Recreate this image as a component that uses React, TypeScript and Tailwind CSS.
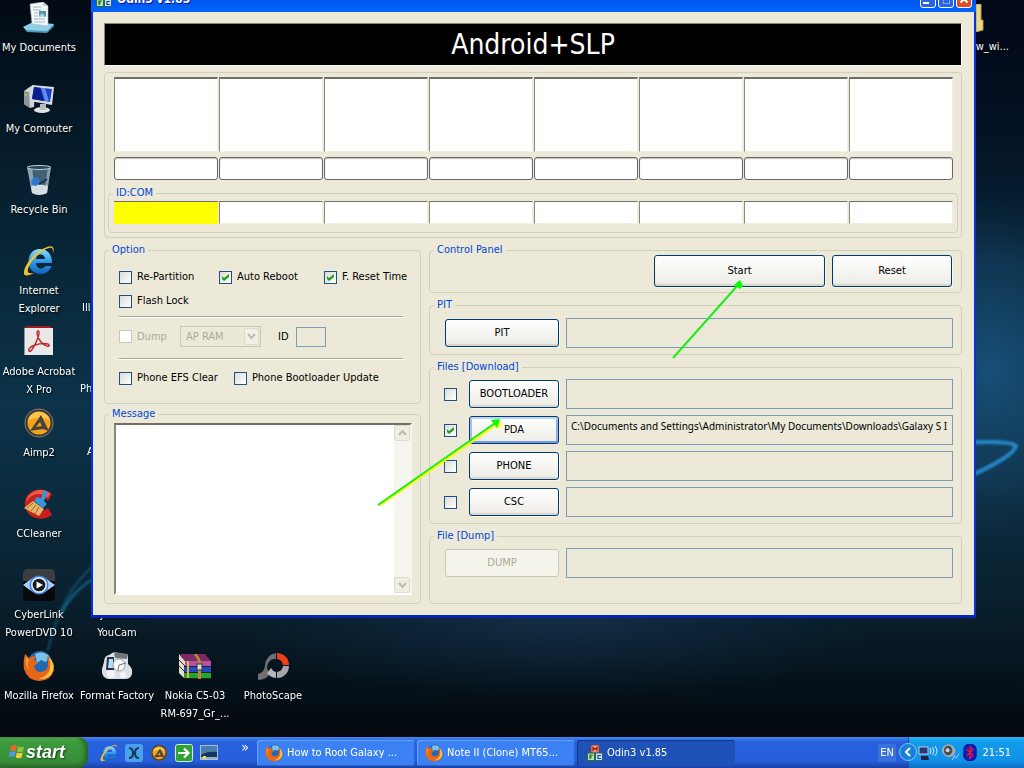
import React, { useState } from "react";

type IconProps = { className?: string };

/* ---------- Desktop icons ---------- */

function DocumentsIcon() {
  return (
    <svg viewBox="0 0 32 32" className="size-8" aria-hidden="true">
      <path d="M0 25 L10 20 L31 22 L24 30 L4 29Z" fill="#8fd0e6" />
      <path d="M0 25 L4 28 L24 29 L31 22 L31 24 L24 31 L4 30Z" fill="#4d9cc0" />
      <path d="M7 2 L20 0 L25 4 L25 24 L9 22Z" fill="#f3f8fb" stroke="#9db4c1" strokeWidth=".6" />
      <path d="M20 0 L20 4 L25 4Z" fill="#c5d6de" />
      <path d="M10 5h8M10 8h8M11 11h4M11 14h4M11 17h11M11 20h11" stroke="#9fb2bd" strokeWidth="1" />
      <rect x="16" y="9" width="7" height="6" fill="#4d92b8" />
      <path d="M16 14l3-3 4 4h-7z" fill="#a9d5c8" />
    </svg>
  );
}

function ComputerIcon() {
  return (
    <svg viewBox="0 0 32 32" className="size-8" aria-hidden="true">
      <path d="M1 8 L8 3 L12 4 L11 24 L7 25 L1 21Z" fill="#cfd4d6" />
      <path d="M1 8 L6 9 L7 25 L1 21Z" fill="#8e9698" />
      <circle cx="3" cy="12" r="1" fill="#9be04a" />
      <ellipse cx="19" cy="27" rx="8" ry="3" fill="#dfe3e5" />
      <path d="M17 21h6v6h-6z" fill="#b8bfc2" />
      <path d="M9 2 L31 4 L29 22 L7 18Z" fill="#d9dee0" />
      <path d="M11 4 L29 6 L27 19 L9 16Z" fill="#1c3fc4" />
      <path d="M11 4 L17 5 L21 18 L9 16Z" fill="#0a1f8a" />
      <path d="M18 5 L22 5 L26 18 L22 18Z" fill="#5f8df0" />
    </svg>
  );
}

function BinIcon() {
  return (
    <svg viewBox="0 0 32 32" className="size-8" aria-hidden="true">
      <path d="M4 3 L28 3 L24 29 Q16 33 9 29Z" fill="#52718a" fillOpacity=".8" />
      <path d="M4 3 L9 3 L12 30 L9 29Z" fill="#a9bdca" fillOpacity=".7" />
      <path d="M25 3 L28 3 L24 29 L21 30Z" fill="#b9c8d1" fillOpacity=".6" />
      <path d="M8 22 Q16 19 25 22 L24 29 Q16 33 9 29Z" fill="#d5dde0" />
      <ellipse cx="16" cy="3.500" rx="12" ry="2" fill="#28455c" stroke="#c3d0d8" />
      <path d="M8 17l4-4 4 2 1 4-4 3-4-1z" fill="#2f78cf" />
      <path d="M16 20l4-2 4 -3" stroke="#19344c" strokeWidth="2" fill="none" />
    </svg>
  );
}

function IeIcon({ className = "size-8" }: IconProps) {
  return (
    <svg viewBox="0 0 32 32" className={className} aria-hidden="true">
      <defs>
        <linearGradient id="ie" x1="0" y1="0" x2="0" y2="1">
          <stop offset="0" stopColor="#8fdcff" />
          <stop offset=".5" stopColor="#2a9be8" />
          <stop offset="1" stopColor="#1460b8" />
        </linearGradient>
      </defs>
      <path
        d="M17 4 C25 4 29 10 29 18 L13 18 C13.500 22 15.500 23.500 18 23.500 C20 23.500 21.500 22.500 22.500 21 L28.500 21 C27 26 23 29 17.500 29 C10.500 29 5.500 24 5.500 16.500 C5.500 9 10.500 4 17 4Z M13 14 L22 14 C22 11 20 9.500 17.500 9.500 C15 9.500 13.300 11 13 14Z"
        fill="url(#ie)"
        fillRule="evenodd"
      />
      <path d="M30 8 C32 2 29 0 24 2 C14 5 2 18 1 27 C0 32 6 31 11 28 C6 29 4 28 5 24 C8 15 18 5 26 3 C30 2 30 5 30 8Z" fill="#f2c230" />
    </svg>
  );
}

function AcrobatIcon() {
  return (
    <svg viewBox="0 0 32 32" className="size-8" aria-hidden="true">
      <rect x="1" y="2" width="29" height="27" fill="#e9e9e9" />
      <path d="M1 2 L3 0 H28 V2Z" fill="#a41a1c" />
      <path d="M1 2 h1 v27 h-1z" fill="#8f9598" />
      <path
        d="M15 5 C13 5 14 11 18 16 C22 21 27 21 26 19 C25 17 18 17 12 19 C6 21 5 24 6 25 C8 27 12 19 14 14 C16 9 17 5 15 5Z"
        fill="none"
        stroke="#c02427"
        strokeWidth="1.400"
      />
    </svg>
  );
}

function AimpIcon({ className = "size-8" }: IconProps) {
  return (
    <svg viewBox="0 0 32 32" className={className} aria-hidden="true">
      <circle cx="16" cy="16" r="15" fill="#35383a" />
      <circle cx="16" cy="16" r="14" fill="none" stroke="#777b7d" strokeWidth="1" />
      <circle cx="16" cy="16" r="11.500" fill="#f6a21a" />
      <path d="M5 13 A11.500 11.500 0 0 1 27 13 Q16 8 5 13Z" fill="#ffc44d" />
      <path d="M18 8 L26 24 L20 22 L17 15 L13 20 L19 19 L20 22 L7 24Z" fill="#47433b" />
    </svg>
  );
}

function CCleanerIcon() {
  return (
    <svg viewBox="0 0 32 32" className="size-8" aria-hidden="true">
      <path d="M29 6 L25 13 C22 8 13 8 11 15 C10 21 15 25 20 23 L25 20 L29 27 C20 34 4 31 2 18 C0 4 17 -4 29 6Z" fill="#c9201d" />
      <path d="M27 5 C17 -2 4 4 3 14 C9 4 19 4 25 10Z" fill="#ec5a4c" />
      <path d="M21 2 L25 4 L21 13 L24 16 L20 20 L11 13 L14 9 L18 10Z" fill="#3b93d8" />
      <path d="M10 13 L21 21 L16 28 L1 20Z" fill="#e7b668" />
      <path d="M10 15 L4 20 M13 17 L8 23 M16 19 L12 26" stroke="#94632a" strokeWidth="1" />
    </svg>
  );
}

function PowerDvdIcon() {
  return (
    <svg viewBox="0 0 32 32" className="size-8" aria-hidden="true">
      <rect width="32" height="32" rx="4" fill="#08090b" />
      <path d="M0 4 a4 4 0 0 1 4 -4 H28 a4 4 0 0 1 4 4 V12 H0Z" fill="#3b3d40" />
      <path d="M0 16 Q8 10 10 9 Q16 5 22 9 L32 16 L22 23 Q16 27 10 23 Q8 22 0 16Z" fill="#a9cdf8" />
      <circle cx="16" cy="16" r="9.500" fill="#3f7fd8" />
      <circle cx="16" cy="16" r="8" fill="#d7eaff" />
      <circle cx="16" cy="16" r="6.300" fill="#17191c" />
      <path d="M13.500 12.500 L20 16 L13.500 19.500Z" fill="#fff" />
    </svg>
  );
}

function FirefoxIcon({ className = "size-8" }: IconProps) {
  return (
    <svg viewBox="0 0 32 32" className={className} aria-hidden="true">
      <circle cx="17" cy="13" r="12" fill="#2369b0" />
      <path d="M12 4 Q20 0 26 6 L23 12 L18 10 L14 13Z" fill="#79c4ee" />
      <path
        d="M2 4 L6 8 Q9 6 13 6 L11 10 L15 13 L11 16 Q12 22 18 22 Q26 21 25 12 L24 6 Q32 12 31 20 Q28 31 16 31 Q4 30 1 19 Q0 10 2 4Z"
        fill="#e8661a"
      />
      <path d="M26 7 Q32 13 30 21 Q26 30 16 29 Q25 26 27 19 Q28 13 26 7Z" fill="#ffc83a" />
      <path d="M3 7 L6 10 Q4 15 6 20 Q2 16 3 7Z" fill="#f9a13a" />
    </svg>
  );
}

function FormatFactoryIcon() {
  return (
    <svg viewBox="0 0 32 32" className="size-8" aria-hidden="true">
      <path d="M3 12 Q3 6 8 5 L13 2 L27 5 L27 14 Q32 18 31 24 Q30 29 24 29 L7 29 Q0 27 1 19Z" fill="#dbe1e4" />
      <path d="M13 2 L27 4 L26 9 L14 8Z" fill="#6d777c" />
      <path d="M6 7 L13 7 L13 20 L5 20Z" fill="#20354a" />
      <path d="M8 9 H12 V18 H7Z" fill="#b9dcf4" />
      <circle cx="18" cy="15" r="6" fill="#fafcfd" stroke="#9aa4a9" />
      <path d="M18 15 L25 13 M18 15 L17 20" stroke="#6a7175" />
      <circle cx="10" cy="24" r="4" fill="#f3f5f6" />
      <circle cx="22" cy="25" r="3" fill="#f3f5f6" />
    </svg>
  );
}

function WinrarIcon() {
  return (
    <svg viewBox="0 0 32 32" className="size-8" aria-hidden="true">
      <path d="M0 4 L6 11 L6 29 L0 23Z" fill="#e4dccb" />
      <path d="M0 4 L26 4 L32 11 L6 11Z" fill="#7d2a63" />
      <path d="M6 11 H32 V16 H6Z" fill="#b7529f" />
      <path d="M5 17 H32 V22 H5Z" fill="#2549c7" />
      <path d="M5 23 H32 V28 H5Z" fill="#24a52f" />
      <path d="M5 16.500 H32 M5 22.500 H32 M5 28.500 H32" stroke="#2b2018" />
      <path d="M0 10 L6 16 M0 16 L6 22" stroke="#3a2b1c" />
      <path d="M8 11 h2 v17 h-2z" fill="#d9b94c" />
      <path d="M15 4 L18 4 L22 11 V29 H19 V11Z" fill="#b98a35" />
      <rect x="18" y="14" width="5" height="6" fill="#d6d8d9" stroke="#333" />
    </svg>
  );
}

function PhotoScapeIcon() {
  return (
    <svg viewBox="0 0 32 32" className="size-8" aria-hidden="true">
      <path d="M19 3 A12.500 12.500 0 0 0 8 15 Q8 22 1 24 V30 Q10 30 13 23 A8 8 0 0 1 19 9Z" fill="#6d6f70" />
      <path d="M20 3 A12 12 0 0 1 32 15 H26 A7 7 0 0 0 20 9Z" fill="#ef3e1c" />
      <path d="M32 16 A12 12 0 0 1 20 28 V22 A7 7 0 0 0 26 16Z" fill="#a4a6a7" />
      <path d="M19 28 A12 12 0 0 1 10 23 L14 18 A7 7 0 0 0 19 22Z" fill="#b4b6b7" />
    </svg>
  );
}

function BlocksIcon({ className }: IconProps) {
  return (
    <svg viewBox="0 0 16 16" className={className} aria-hidden="true">
      <rect x="4" y="0" width="8" height="8" fill="#f1a58b" stroke="#8b3a20" />
      <path d="M6 6.500V2.500l2 2 2-2v4" fill="none" stroke="#a01010" strokeWidth="1.200" />
      <rect x="0.500" y="8" width="7" height="7.500" fill="#b9e0ac" stroke="#2d6b3a" />
      <path d="M3 14v-4h3M3 12h2" fill="none" stroke="#17652a" strokeWidth="1.200" />
      <rect x="8.500" y="8" width="7" height="7.500" fill="#c2e3f2" stroke="#2d5a7d" />
      <path d="M14 10.500h-3v3h3" fill="none" stroke="#1b4f80" strokeWidth="1.200" />
    </svg>
  );
}

function XpFlag() {
  return (
    <svg viewBox="0 0 16 16" className="size-4" aria-hidden="true">
      <path d="M2 2 Q5 0 8 2 L7 7 Q4 5.500 1 7Z" fill="#f0652c" />
      <path d="M9 2.500 Q12 4 15 2.500 L14 7.500 Q11 9 8 7.500Z" fill="#8cc63e" />
      <path d="M.8 8 Q4 6.500 6.800 8 L5.700 13 Q3 11.500 0 13Z" fill="#4a9be8" />
      <path d="M7.800 8.500 Q10.500 10 13.800 8.500 L12.600 13.500 Q10 15 6.800 13.500Z" fill="#fbcf3a" />
    </svg>
  );
}

/* ---------- Desktop ---------- */

function Wallpaper() {
  return (
    <svg viewBox="0 0 1024 737" preserveAspectRatio="none" className="absolute inset-0 size-full" aria-hidden="true">
      <defs>
        <linearGradient id="base" x1="0" y1="0" x2="0" y2="1">
          <stop offset="0" stopColor="#020a14" />
          <stop offset=".25" stopColor="#06202f" />
          <stop offset=".55" stopColor="#0c3349" />
          <stop offset=".8" stopColor="#0a2231" />
          <stop offset="1" stopColor="#03080d" />
        </linearGradient>
        <radialGradient id="glow">
          <stop offset="0" stopColor="#185078" />
          <stop offset=".6" stopColor="#143f60" stopOpacity=".6" />
          <stop offset="1" stopColor="#0b2840" stopOpacity="0" />
        </radialGradient>
        <radialGradient id="glow2">
          <stop offset="0" stopColor="#163048" />
          <stop offset="1" stopColor="#0b2840" stopOpacity="0" />
        </radialGradient>
        <linearGradient id="dark" x1="0" y1="0" x2="0" y2="1">
          <stop offset="0" stopColor="#020817" stopOpacity="1" />
          <stop offset="1" stopColor="#04142c" stopOpacity="0" />
        </linearGradient>
        <filter id="soft">
          <feGaussianBlur stdDeviation="1.200" />
        </filter>
      </defs>
      <rect width="1024" height="737" fill="url(#base)" />
      <rect x="900" width="124" height="300" fill="url(#dark)" />
      <ellipse cx="990" cy="370" rx="150" ry="190" fill="url(#glow)" />
      <ellipse cx="560" cy="610" rx="340" ry="90" fill="url(#glow2)" />
      <g fill="none" strokeLinecap="round" filter="url(#soft)">
        <path d="M94 566 Q62 590 48 650" stroke="#14698c" strokeWidth="3" opacity=".45" />
        <path d="M94 578 Q72 592 62 612" stroke="#1c85aa" strokeWidth="3" opacity=".55" />
        <path d="M960 443 Q1010 440 1016 446 Q1014 456 970 476" stroke="#2688c8" strokeWidth="4" />
      </g>
    </svg>
  );
}

type Shortcut = { label: string[]; icon: React.ReactNode; place: string };

const shortcuts: Shortcut[] = [
  { label: ["My Documents"], icon: <DocumentsIcon />, place: "left-0 top-[2px]" },
  { label: ["My Computer"], icon: <ComputerIcon />, place: "left-0 top-[83px]" },
  { label: ["Recycle Bin"], icon: <BinIcon />, place: "left-0 top-[164px]" },
  { label: ["Internet", "Explorer"], icon: <IeIcon />, place: "left-0 top-[245px]" },
  { label: ["Adobe Acrobat", "X Pro"], icon: <AcrobatIcon />, place: "left-0 top-[326px]" },
  { label: ["Aimp2"], icon: <AimpIcon />, place: "left-0 top-[407px]" },
  { label: ["CCleaner"], icon: <CCleanerIcon />, place: "left-0 top-[488px]" },
  { label: ["CyberLink", "PowerDVD 10"], icon: <PowerDvdIcon />, place: "left-0 top-[569px]" },
  { label: ["Mozilla Firefox"], icon: <FirefoxIcon />, place: "left-0 top-[650px]" },
  { label: ["CyberLink", "YouCam"], icon: null, place: "left-[78px] top-[569px]" },
  { label: ["Format Factory"], icon: <FormatFactoryIcon />, place: "left-[78px] top-[650px]" },
  { label: ["Nokia C5-03", "RM-697_Gr_..."], icon: <WinrarIcon />, place: "left-[156px] top-[650px]" },
  { label: ["PhotoScape"], icon: <PhotoScapeIcon />, place: "left-[234px] top-[650px]" },
];

function DesktopShortcut({ label, icon, place }: Shortcut) {
  return (
    <a
      href="#"
      className={`absolute ${place} flex w-[78px] flex-col items-center gap-[5px] text-center whitespace-nowrap text-white [text-shadow:1px_1px_2px_#000]`}
    >
      <span className="block size-8">{icon}</span>
      <span className="flex flex-col items-center leading-[18px]">
        {label.map((line) => (
          <span key={line}>{line}</span>
        ))}
      </span>
    </a>
  );
}

/* ---------- Form controls ---------- */

function Check({ label, checked, disabled, name }: { label?: string; checked?: boolean; disabled?: boolean; name?: string }) {
  const [on, setOn] = useState(!!checked);
  return (
    <label className={`flex items-center gap-[5px] whitespace-nowrap ${disabled ? "text-[#aca899]" : ""}`}>
      <span className="relative block size-[13px] shrink-0">
        <input
          type="checkbox"
          aria-label={label ? undefined : name}
          checked={on}
          disabled={disabled}
          onChange={(e) => setOn(e.target.checked)}
          className="block size-[13px] appearance-none border border-[#1d5281] bg-linear-to-br from-[#dcdcd7] to-white disabled:border-[#cac8bb] disabled:bg-white disabled:bg-none"
        />
        {on && (
          <svg viewBox="0 0 13 13" className="pointer-events-none absolute inset-0 size-[13px]" aria-hidden="true">
            <path d="M3 5 L5 7 L10 3 V6 L5 10 L3 8Z" fill="#21a121" />
          </svg>
        )}
      </span>
      {label && <span>{label}</span>}
    </label>
  );
}

function XpButton({ children, className = "", focused, disabled }: { children: React.ReactNode; className?: string; focused?: boolean; disabled?: boolean }) {
  const look = disabled
    ? "border-[#c9c7ba] bg-[#f5f4ea] text-[#aca899]"
    : focused
      ? "border-[#003c74] bg-linear-to-b from-white to-[#ecebe5] shadow-[inset_0_2px_0_#bcd4f6,inset_0_-2px_0_#7a9ae0,inset_2px_0_0_#a3bff0,inset_-2px_0_0_#8faee8]"
      : "border-[#003c74] bg-linear-to-b from-white to-[#ecebe5] shadow-[inset_0_-2px_1px_#d8d5cb,1px_1px_0_#f8f7f2]";
  return (
    <button type="button" disabled={disabled} className={`shrink-0 rounded-[3px] border text-center ${look} ${className}`}>
      {children}
    </button>
  );
}

function PathField({ name, value = "" }: { name: string; value?: string }) {
  return (
    <input
      type="text"
      aria-label={name}
      value={value}
      readOnly
      className="h-[30px] min-w-0 flex-1 border border-[#7f9db9] bg-transparent px-1 pb-[9px] font-['Noto_Sans',sans-serif] text-[10px] outline-none"
    />
  );
}

function Group({ title, className = "", bodyClassName, children }: { title: string; className?: string; bodyClassName: string; children: React.ReactNode }) {
  return (
    <fieldset className={`min-w-0 rounded-[4px] border border-[#d0d0bf] ${className}`}>
      <legend className="ml-1 px-[3px] leading-[14px] text-[#0046d5]">{title}</legend>
      <div className={bodyClassName}>{children}</div>
    </fieldset>
  );
}

const slots = [1, 2, 3, 4, 5, 6, 7, 8];
const sunken = "border border-t-[#716f64] border-l-[#8a887c] border-r-[#f1efe2] border-b-[#f1efe2]";

function DevicePanel() {
  return (
    <section aria-label="Devices" className="rounded-[4px] border border-[#d0d0bf] px-[3px] pt-1 pb-1">
      <div className="grid grid-cols-8 gap-px pr-[5px] pl-[6px]">
        {slots.map((n) => (
          <div key={n} className={`h-[75px] border-t-2 bg-white ${sunken}`} />
        ))}
      </div>
      <div className="mt-[5px] grid grid-cols-8 gap-px pr-[5px] pl-[6px]">
        {slots.map((n) => (
          <div key={n} role="progressbar" aria-label={`Slot ${n}`} className="h-[23px] rounded-[3px] border border-[#686868] bg-white shadow-[inset_0_1px_1px_#bebebe]" />
        ))}
      </div>
      <Group title="ID:COM" className="mt-[6px]" bodyClassName="pt-px pr-1 pb-2 pl-[5px]">
        <div className="grid grid-cols-8 gap-px">
          {slots.map((n) =>
            n === 1 ? (
              <div key={n} className="h-[23px] border-t border-[#716f64] bg-[#ff0]" />
            ) : (
              <div key={n} className={`h-[23px] bg-white ${sunken}`} />
            ),
          )}
        </div>
      </Group>
    </section>
  );
}

function Divider() {
  return <hr className="h-[2px] border-0 border-t border-b border-t-[#aca899] border-b-white" />;
}

function OptionPanel() {
  return (
    <Group title="Option" bodyClassName="pt-[13px] pr-[17px] pb-[18px] pl-[14px]">
      <div className="grid grid-cols-[100px_105px_auto] gap-y-[10px] leading-[14px]">
        <Check label="Re-Partition" />
        <Check label="Auto Reboot" checked />
        <Check label="F. Reset Time" checked />
        <Check label="Flash Lock" />
      </div>
      <div className="mt-2">
        <Divider />
      </div>
      <div className="mt-2 flex items-center">
        <div className="w-[61px]">
          <Check label="Dump" disabled />
        </div>
        <div className="relative w-[81px]">
          <select aria-label="Dump area" disabled className="block h-[21px] w-full appearance-none border border-[#c9c7ba] bg-[#ebe8d8] px-[5px] text-[#aca899] opacity-100">
            <option>AP RAM</option>
          </select>
          <span className="pointer-events-none absolute top-[2px] right-[2px] flex h-[17px] w-[15px] items-center justify-center rounded-[2px] border border-[#dcdacb] bg-[#f2f0e6]">
            <svg viewBox="0 0 9 7" className="h-[7px] w-[9px]" aria-hidden="true">
              <path d="M1 1 L4.500 5 L8 1" fill="none" stroke="#bdbaab" strokeWidth="2" />
            </svg>
          </span>
        </div>
        <label className="ml-[17px] flex items-center gap-[7px]">
          ID
          <input type="text" className="h-[20px] w-[30px] border border-[#7f9db9] bg-transparent" />
        </label>
      </div>
      <div className="mt-[11px]">
        <Divider />
      </div>
      <div className="mt-[11px] flex gap-4 leading-[14px]">
        <Check label="Phone EFS Clear" />
        <Check label="Phone Bootloader Update" />
      </div>
    </Group>
  );
}

function ScrollArrow({ down }: { down?: boolean }) {
  return (
    <button type="button" disabled aria-label={down ? "Scroll down" : "Scroll up"} className="flex h-4 w-4 items-center justify-center rounded-[2px] border border-[#dedccf] bg-[#f0eee4]">
      <svg viewBox="0 0 9 7" className="h-[7px] w-[9px]" aria-hidden="true">
        <path d={down ? "M1 1 L4.500 5 L8 1" : "M1 5 L4.500 1 L8 5"} fill="none" stroke="#bdbaab" strokeWidth="2" />
      </svg>
    </button>
  );
}

function MessagePanel() {
  return (
    <Group title="Message" bodyClassName="pt-[2px] pr-2 pb-2 pl-[9px]">
      <div className="flex h-[172px] border-2 border-t-[#716f64] border-r-[#f6f5ee] border-b-white border-l-[#8a887c] bg-white">
        <textarea aria-label="Message" readOnly className="min-w-0 flex-1 resize-none bg-white outline-none" />
        <div className="flex w-4 flex-col justify-between bg-[#f6f5f0]">
          <ScrollArrow />
          <ScrollArrow down />
        </div>
      </div>
    </Group>
  );
}

const files = [
  { name: "BOOTLOADER" },
  { name: "PDA", checked: true, value: "C:\\Documents and Settings\\Administrator\\My Documents\\Downloads\\Galaxy S I" },
  { name: "PHONE" },
  { name: "CSC" },
];

function FilePanels() {
  return (
    <div className="flex min-w-0 flex-1 flex-col gap-[5px]">
      <Group title="Control Panel" bodyClassName="pr-[9px] pb-[5px]">
        <div className="-mt-[2px] flex justify-end gap-[7px]">
          <XpButton className="h-8 w-[171px]">Start</XpButton>
          <XpButton className="h-8 w-[120px]">Reset</XpButton>
        </div>
      </Group>
      <Group title="PIT" bodyClassName="pt-[6px] pr-2 pb-[6px] pl-[15px]">
        <div className="flex items-center gap-[7px]">
          <XpButton className="h-7 w-[114px]">PIT</XpButton>
          <PathField name="PIT file" />
        </div>
      </Group>
      <Group title="Files [Download]" bodyClassName="pt-[5px] pr-2 pb-[6px] pl-[14px]">
        <div className="flex flex-col gap-[6px]">
          {files.map((f) => (
            <div key={f.name} className="flex items-center">
              <Check name={`Use ${f.name}`} checked={f.checked} />
              <XpButton className="mr-[7px] ml-3 h-7 w-[90px]" focused={f.name === "PDA"}>
                {f.name}
              </XpButton>
              <PathField name={`${f.name} file`} value={f.value} />
            </div>
          ))}
        </div>
      </Group>
      <Group title="File [Dump]" bodyClassName="pt-[5px] pr-2 pb-[25px] pl-[15px]">
        <div className="flex items-center gap-[7px]">
          <XpButton disabled className="h-7 w-[114px]">
            DUMP
          </XpButton>
          <PathField name="Dump file" />
        </div>
      </Group>
    </div>
  );
}

function Arrows() {
  return (
    <svg viewBox="0 0 400 240" className="pointer-events-none absolute top-[280px] left-[281px] h-[240px] w-[400px]" aria-hidden="true">
      <path d="M5 240 L125 157" stroke="#ff0" strokeWidth="2" />
      <path d="M4 239 L124 155" stroke="#19ec19" strokeWidth="2" />
      <path d="M122 163 L127 154 L127 161Z" fill="#ff0" />
      <path d="M117 154 L126 153 L123 162Z" fill="#0f0" />
      <path d="M299 92 L364 19" stroke="#19ec19" strokeWidth="2" />
      <path d="M360 19 L366 14 L369 20 L366 23Z" fill="#0f0" />
    </svg>
  );
}

function OdinWindow() {
  const caption = "flex h-[18px] w-4 items-end justify-center rounded-[3px] border border-white pb-[3px]";
  return (
    <main className="absolute top-[-14px] right-[48px] left-[91px] border-r-2 border-b-[3px] border-l-2 border-[#0831d9] border-b-[#0526b4] bg-[#ece9d8]">
      <header className="-mx-[2px] flex h-[26px] items-center justify-between bg-linear-to-b from-[#0058ee] from-60% to-[#0066ff] pr-1 pl-[5px]">
        <h1 className="flex items-center gap-[5px] text-[12px] leading-4 font-bold whitespace-nowrap text-white [text-shadow:1px_1px_0_#0f1089]">
          <BlocksIcon className="size-4" />
          Odin3 v1.85
        </h1>
        <div className="flex gap-[2px]">
          <button type="button" aria-label="Minimize" className={`${caption} bg-[#2a64e4]`}>
            <span className="mr-1 h-[2px] w-[6px] bg-white" />
          </button>
          <button type="button" aria-label="Maximize" className={`${caption} border-[#5b8cf0] bg-[#2a64e4]`}>
            <span className="h-[7px] w-[7px] border border-[#7fa5f4]" />
          </button>
          <button type="button" aria-label="Close" className={`${caption} bg-[#e04e28]`}>
            <svg viewBox="0 0 10 10" className="size-[10px]" aria-hidden="true">
              <path d="M1.500 1.500 L8.500 8.500 M8.500 1.500 L1.500 8.500" stroke="#fff" strokeWidth="2" />
            </svg>
          </button>
        </div>
      </header>
      <div className="flex flex-col border-l border-[#dfe8f5] pt-[11px] pr-3 pb-[11px] pl-[10px]">
        <div className="flex h-[43px] items-center justify-center border border-t-[#8a887c] border-r-white border-b-white border-l-[#8a887c] bg-black text-[28px] leading-8 text-white">
          Android+SLP
        </div>
        <div className="mt-[6px]">
          <DevicePanel />
        </div>
        <div className="mt-[5px] flex gap-2">
          <div className="flex w-[317px] shrink-0 flex-col gap-[3px]">
            <OptionPanel />
            <MessagePanel />
          </div>
          <FilePanels />
        </div>
      </div>
      <Arrows />
    </main>
  );
}

/* ---------- Taskbar ---------- */

const tasks = [
  { label: "How to Root Galaxy ...", icon: <FirefoxIcon className="size-[18px]" /> },
  { label: "Note II (Clone) MT65...", icon: <FirefoxIcon className="size-[18px]" /> },
  { label: "Odin3 v1.85", icon: <BlocksIcon className="size-4" />, active: true },
];

function Taskbar() {
  return (
    <footer className="relative flex h-[31px] items-stretch bg-[linear-gradient(#3f8cf3_0px,#3577e8_2px,#2761dc_5px,#245edb_24px,#1941a5_31px)] text-white">
      <button
        type="button"
        className="flex w-[88px] items-center gap-px rounded-r-[10px] bg-[linear-gradient(#5eb55e_0px,#3d9a3d_5px,#388f38_24px,#2a6f2a_31px)] pb-[2px] pl-[9px] font-['Liberation_Sans',sans-serif] text-[18px] leading-5 font-bold italic shadow-[inset_-3px_0_4px_#256325] [text-shadow:1px_1px_2px_#173f17]"
      >
        <XpFlag />
        start
      </button>
      <nav aria-label="Quick launch" className="flex w-[169px] items-center gap-[7px] pl-3">
        <IeIcon className="size-[18px]" />
        <svg viewBox="0 0 18 18" className="size-[18px]" aria-hidden="true">
          <rect width="18" height="18" rx="3" fill="#4aa2ec" />
          <path d="M4 4 Q8 4 8 9 Q8 14 4 14 M14 4 Q10 4 10 9 Q10 14 14 14" fill="none" stroke="#12395e" strokeWidth="2" />
        </svg>
        <AimpIcon className="size-[18px]" />
        <svg viewBox="0 0 18 18" className="size-[18px]" aria-hidden="true">
          <rect x=".5" y=".5" width="17" height="17" rx="2" fill="#2fa336" stroke="#d4efd0" />
          <path d="M3 9 H13 M9 4.500 L13.500 9 L9 13.500" fill="none" stroke="#fff" strokeWidth="2.200" />
        </svg>
        <svg viewBox="0 0 18 18" className="size-[18px]" aria-hidden="true">
          <rect x=".5" y="1.500" width="17" height="14" fill="#14355c" stroke="#a6bfdc" />
          <path d="M1 2 H17 V8 Q8 7 1 11Z" fill="#4c7dac" />
          <path d="M1 13 H17 V15 H1Z" fill="#9dafbf" />
          <path d="M3 12 h3 v3 h-3z" fill="#f4d94b" />
        </svg>
        <span className="mb-3 ml-auto pr-2 text-[14px] leading-4">»</span>
      </nav>
      <div className="flex min-w-0 flex-1 items-center gap-[2px] text-[11px]">
        {tasks.map((t) => (
          <button
            key={t.label}
            type="button"
            className={`flex h-[26px] w-[158px] items-center gap-1 rounded-[3px] px-2 text-left whitespace-nowrap ${
              t.active ? "bg-[#1e52b7] pl-[10px] shadow-[inset_1px_1px_1px_#123a8a]" : "bg-[#3c81f3] shadow-[inset_1px_1px_1px_#6aa2fa,inset_-1px_-1px_1px_#2a63d0]"
            }`}
          >
            {t.icon}
            <span>{t.label}</span>
          </button>
        ))}
      </div>
      <div className="flex items-center pr-3 pl-[5px]">
        <span className="bg-[#3a70da] px-[2px] leading-[18px]">EN</span>
      </div>
      <div className="relative flex w-[116px] items-center gap-[3px] border-l border-[#0d5aa8] bg-[linear-gradient(#27b5f7_0px,#129bea_5px,#1290e8_24px,#0c6fc4_31px)] pr-[13px] pl-[9px]">
        <button type="button" aria-label="Show hidden icons" className="absolute top-[6px] left-[-10px] flex size-[18px] items-center justify-center rounded-full border border-[#7cc6f5] bg-[#1a7fdc]">
          <svg viewBox="0 0 8 10" className="h-[10px] w-2" aria-hidden="true">
            <path d="M6 1 L2 5 L6 9" fill="none" stroke="#fff" strokeWidth="2" />
          </svg>
        </button>
        <svg viewBox="0 0 20 18" className="h-[18px] w-5" aria-hidden="true">
          <rect x="1" y="3" width="9" height="7" fill="#26397e" stroke="#c3c8d4" />
          <path d="M3 12 h7 l1 4 h-8z" fill="#1d2447" />
          <path d="M12 4 q2 3 0 6 M14.500 3 q3 4 0 8 M17 2 q4 5 0 10" stroke="#d6ecfa" fill="none" />
        </svg>
        <svg viewBox="0 0 20 20" className="size-[19px]" aria-hidden="true">
          <ellipse cx="8" cy="8" rx="7" ry="6.500" fill="#a9adb0" transform="rotate(25 8 8)" />
          <ellipse cx="7.500" cy="8" rx="4.500" ry="5" fill="#4c5053" />
          <circle cx="7" cy="7.500" r="2" fill="#d4d8da" />
          <path d="M12 18 l2-5 2 3 3-5" stroke="#a3c4ff" fill="none" />
        </svg>
        <svg viewBox="0 0 14 18" className="h-[17px] w-[14px]" aria-hidden="true">
          <rect x=".5" y=".5" width="13" height="17" rx="5" fill="#0b1cc8" stroke="#05106b" />
          <path d="M3.500 5.500 L10 12 L7 15 V3 L10 6 L3.500 12.500" fill="none" stroke="#f01822" strokeWidth="1.400" />
        </svg>
        <time className="ml-auto">21:51</time>
      </div>
    </footer>
  );
}

export default function App() {
  return (
    <div className="flex h-screen flex-col overflow-hidden bg-[#03080d] font-['DejaVu_Sans_Condensed','DejaVu_Sans',sans-serif] text-[11px] leading-[14px] font-normal text-black">
      <div className="relative min-h-0 flex-1 overflow-hidden">
        <Wallpaper />
        {shortcuts.map((s) => (
          <DesktopShortcut key={s.place} {...s} />
        ))}
        <span className="absolute top-[301px] left-[82px] text-white">Ill</span>
        <span className="absolute top-[382px] left-[80px] text-white">Ph</span>
        <span className="absolute top-[445px] left-[87px] text-white">A</span>
        <a href="#" className="absolute top-1 right-[15px] flex flex-col items-start gap-[6px] leading-[18px] text-white">
          <svg viewBox="0 0 8 28" className="h-7 w-2" aria-hidden="true">
            <path d="M0 0 H5 V16 H7 V26 L0 28Z" fill="#e9d98a" stroke="#b89a3c" />
          </svg>
          <span className="[text-shadow:1px_1px_2px_#000]">w_wi...</span>
        </a>
        <OdinWindow />
      </div>
      <Taskbar />
    </div>
  );
}
